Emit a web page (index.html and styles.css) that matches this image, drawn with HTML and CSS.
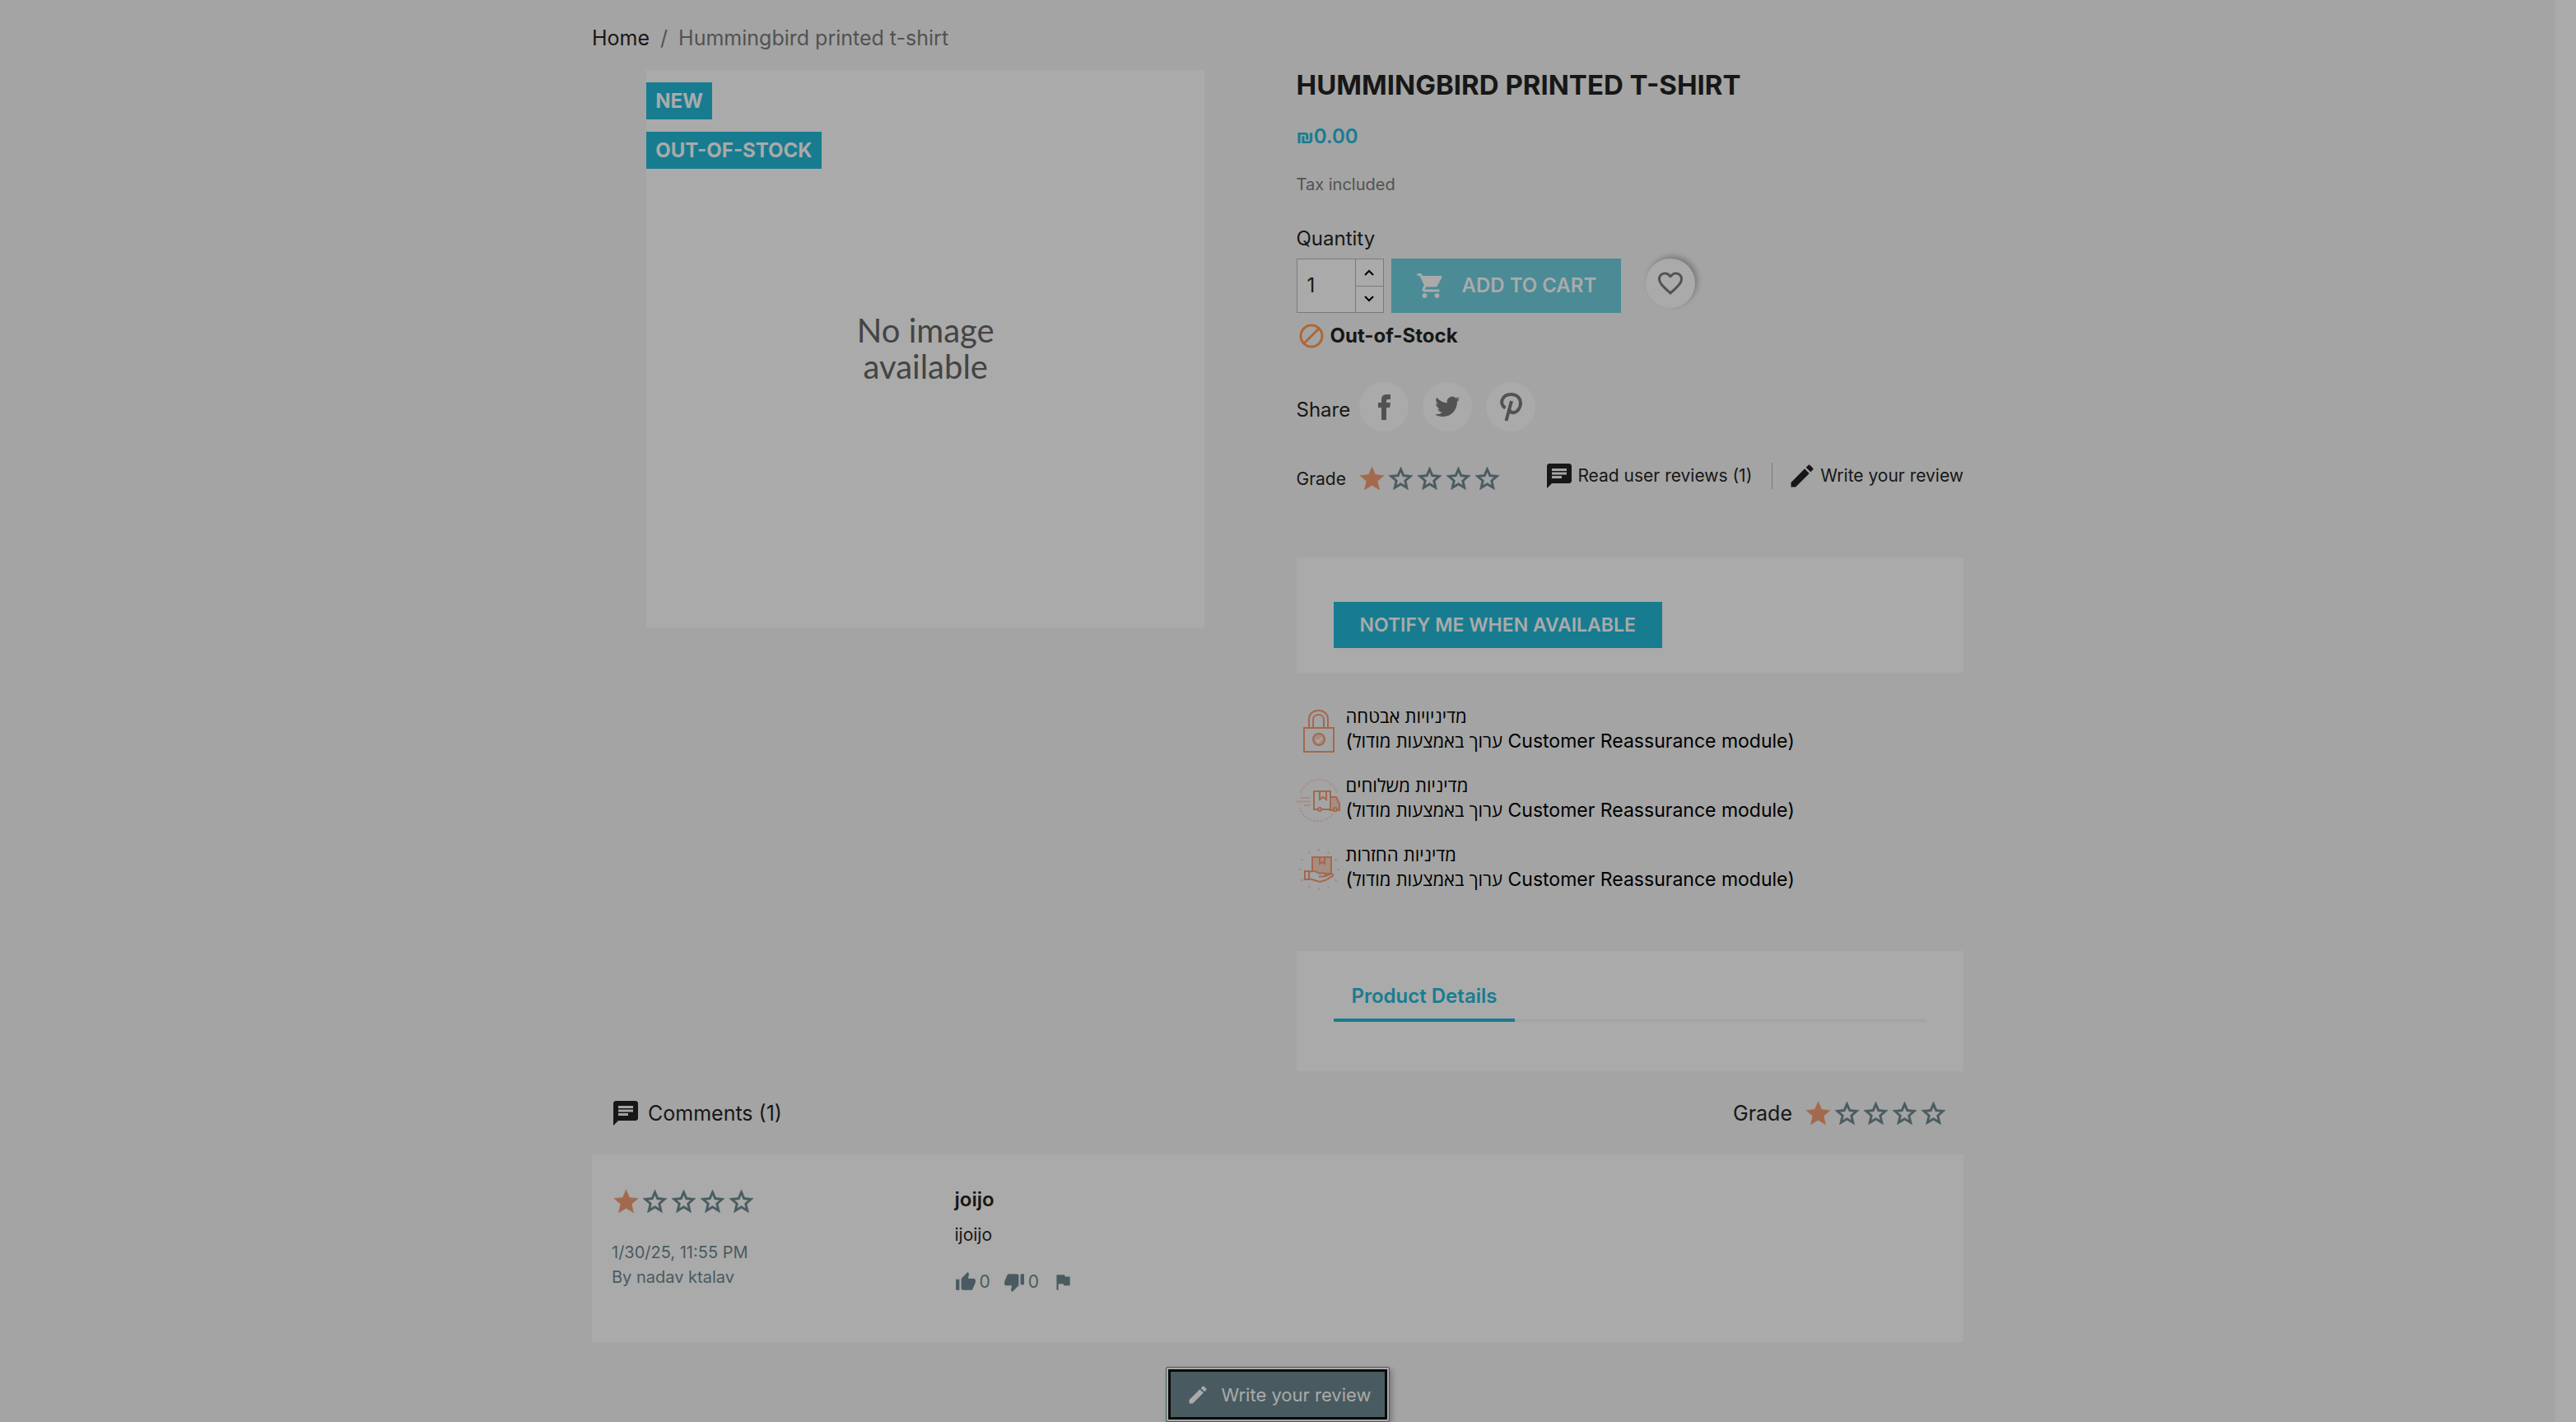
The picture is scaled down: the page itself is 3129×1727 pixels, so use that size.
FILE: index.html
```html
<!DOCTYPE html>
<html lang="en">
<head>
<meta charset="utf-8">
<title>Hummingbird printed t-shirt</title>
<link rel="stylesheet" href="styles.css">
</head>
<body>
<svg class="sprite" aria-hidden="true">
  <symbol id="star" viewBox="0 0 24 24"><path d="M12 17.27L18.18 21l-1.64-7.03L22 9.24l-7.19-.61L12 2 9.19 8.63 2 9.24l5.46 4.73L5.82 21z"/></symbol>
  <symbol id="star-empty" viewBox="0 0 24 24"><path d="M22 9.24l-7.19-.62L12 2 9.19 8.63 2 9.24l5.46 4.73L5.82 21 12 17.27 18.18 21l-1.63-7.03L22 9.24zM12 15.4l-3.76 2.27 1-4.28-3.32-2.88 4.38-.38L12 6.1l1.71 4.04 4.38.38-3.32 2.88 1 4.28L12 15.4z"/></symbol>
  <symbol id="chat" viewBox="0 0 24 24"><path d="M20 2H4c-1.1 0-1.99.9-1.99 2L2 22l4-4h14c1.1 0 2-.9 2-2V4c0-1.1-.9-2-2-2zM6 9h12v2H6V9zm8 5H6v-2h8v2zm4-6H6V6h12v2z"/></symbol>
  <symbol id="pencil" viewBox="0 0 24 24"><path d="M3 17.25V21h3.75L17.81 9.94l-3.75-3.75L3 17.25zM20.71 7.04c.39-.39.39-1.02 0-1.41l-2.34-2.34c-.39-.39-1.02-.39-1.41 0l-1.83 1.83 3.75 3.75 1.83-1.83z"/></symbol>
  <symbol id="cart" viewBox="0 0 24 24"><path d="M7 18c-1.1 0-1.99.9-1.99 2S5.9 22 7 22s2-.9 2-2-.9-2-2-2zM1 2v2h2l3.6 7.59-1.35 2.45c-.16.28-.25.61-.25.96 0 1.1.9 2 2 2h12v-2H7.42c-.14 0-.25-.11-.25-.25l.03-.12.9-1.63h7.45c.75 0 1.41-.41 1.75-1.03l3.58-6.49c.08-.14.12-.31.12-.48 0-.55-.45-1-1-1H5.21l-.94-2H1zm16 16c-1.1 0-1.99.9-1.99 2s.89 2 1.99 2 2-.9 2-2-.9-2-2-2z"/></symbol>
  <symbol id="heart" viewBox="0 0 24 24"><path d="M16.5 3c-1.74 0-3.41.81-4.5 2.09C10.91 3.81 9.24 3 7.5 3 4.42 3 2 5.42 2 8.5c0 3.78 3.4 6.86 8.55 11.54L12 21.35l1.45-1.32C18.6 15.36 22 12.28 22 8.5 22 5.42 19.58 3 16.5 3zm-4.4 15.55l-.1.1-.1-.1C7.14 14.24 4 11.39 4 8.5 4 6.5 5.5 5 7.5 5c1.54 0 3.04.99 3.57 2.36h1.87C13.46 5.99 14.96 5 16.5 5c2 0 3.5 1.5 3.5 3.5 0 2.89-3.14 5.74-7.9 10.05z"/></symbol>
  <symbol id="up" viewBox="0 0 24 24"><path d="M1 21h4V9H1v12zm22-11c0-1.1-.9-2-2-2h-6.31l.95-4.57.03-.32c0-.41-.17-.79-.44-1.06L14.17 1 7.59 7.59C7.22 7.95 7 8.45 7 9v10c0 1.1.9 2 2 2h9c.83 0 1.54-.5 1.84-1.22l3.02-7.05c.09-.23.14-.47.14-.73v-2z"/></symbol>
  <symbol id="down" viewBox="0 0 24 24"><path d="M15 3H6c-.83 0-1.54.5-1.84 1.22l-3.02 7.05c-.09.23-.14.47-.14.73v2c0 1.1.9 2 2 2h6.31l-.95 4.57-.03.32c0 .41.17.79.44 1.06L9.83 23l6.59-6.59c.36-.36.58-.86.58-1.41V5c0-1.1-.9-2-2-2zm4 0v12h4V3h-4z"/></symbol>
  <symbol id="flag" viewBox="0 0 24 24"><path d="M14.4 6L14 4H5v17h2v-7h5.6l.4 2h7V6z"/></symbol>
</svg>

<div class="page">
  <div class="container">
    <nav class="breadcrumb" aria-label="Breadcrumb">
      <a href="#">Home</a><span>/</span><span>Hummingbird printed t-shirt</span>
    </nav>

    <main>
      <div class="product">
        <section class="gallery">
          <div class="cover">
            <ul class="flags">
              <li>NEW</li>
              <li>OUT-OF-STOCK</li>
            </ul>
            <p class="no-image">No image<br>available</p>
          </div>
        </section>

        <section class="info">
          <h1>HUMMINGBIRD PRINTED T-SHIRT</h1>
          <p class="price">₪0.00</p>
          <p class="tax">Tax included</p>

          <label class="quantity-label" for="quantity">Quantity</label>
          <div class="buy">
            <div class="quantity">
              <input id="quantity" type="text" value="1">
              <div class="steps">
                <button type="button" aria-label="Increase"><svg viewBox="0 0 12 12"><path d="M1 9l5-5 5 5"/></svg></button>
                <button type="button" aria-label="Decrease"><svg viewBox="0 0 12 12"><path d="M1 3l5 5 5-5"/></svg></button>
              </div>
            </div>
            <button class="add" type="button"><svg class="icon"><use href="#cart"/></svg>ADD TO CART</button>
            <button class="wish" type="button" aria-label="Add to wishlist"><svg class="icon"><use href="#heart"/></svg></button>
          </div>
          <p class="stock"><svg viewBox="0 0 30 30"><circle cx="15" cy="15" r="13"/><path d="M6 24L24 6"/></svg>Out-of-Stock</p>

          <div class="share">
            <span>Share</span>
            <a href="#" aria-label="Share on Facebook"><svg viewBox="0 0 60 60"><path d="M27 46V31h-4v-6h4v-3c0-5 2-7 7-7h4v6h-3c-2 0-2 1-2 2v2h5l-1 6h-4v15z"/></svg></a>
            <a href="#" aria-label="Tweet"><svg viewBox="0 0 60 60"><path d="M45 20.5c-1.1.5-2.3.8-3.5 1 1.3-.8 2.2-2 2.7-3.4-1.2.7-2.5 1.2-3.9 1.5a6.2 6.2 0 0 0-10.5 5.6c-5.1-.3-9.7-2.7-12.7-6.5a6.2 6.2 0 0 0 1.9 8.2c-1 0-2-.3-2.8-.8 0 3 2.1 5.6 4.900 6.200-.9.2-1.800.3-2.800.1.8 2.500 3.100 4.200 5.800 4.300A12.400 12.400 0 0 1 15 39.200c2.700 1.800 6 2.800 9.500 2.800 11.400 0 17.800-9.600 17.400-18.300 1.200-.9 2.300-1.900 3.100-3.200z"/></svg></a>
            <a href="#" aria-label="Pin it"><svg viewBox="0 0 60 60"><path class="line" d="M23.5 31.5C15 26 20 15 30.5 15c8 0 13 6 11 14-2 7-9 11-13 5.5M31 23l-6.500 24"/></svg></a>
          </div>

          <div class="review-bar">
            <div class="grade">Grade
              <span class="stars"><svg class="on"><use href="#star"/></svg><svg><use href="#star-empty"/></svg><svg><use href="#star-empty"/></svg><svg><use href="#star-empty"/></svg><svg><use href="#star-empty"/></svg></span>
            </div>
            <div class="review-links">
              <a href="#comments"><svg class="icon"><use href="#chat"/></svg>Read user reviews (1)</a>
              <a href="#write"><svg class="icon"><use href="#pencil"/></svg>Write your review</a>
            </div>
          </div>

          <div class="card notify"><button type="button">NOTIFY ME WHEN AVAILABLE</button></div>

          <ul class="reassurance">
            <li>
              <svg viewBox="0 0 54 54"><path d="M15 22V13c0-15 23-15 23 0v9M20 22v-9c0-8 13-8 13 0v9"/><path d="M9 23h36v29H9z" class="bold"/><circle cx="27" cy="37" r="7" class="tint bold"/><path d="M24 37l2 3 5-5" class="pale"/></svg>
              <p><span lang="he">מדיניויות אבטחה</span><br>(<span lang="he">ערוך באמצעות מודול</span> Customer Reassurance module)</p>
            </li>
            <li>
              <svg viewBox="0 0 54 54"><path class="faint" stroke-dasharray="2 2" d="M5 18a23 23 0 0 1 44 0M4 36a23 23 0 0 0 44 0"/><path class="faint" d="M5 24h12M0 28.500h17M9 33h8"/><path class="tint" d="M41 23h7l4 8v8h-11z"/><path class="bold" d="M21 16h20v22H21zM28 17v9l4-3 4 3v-9"/><circle cx="28" cy="38" r="2" class="bold fill"/><circle cx="47" cy="38" r="2" class="bold fill"/></svg>
              <p><span lang="he">מדיניות משלוחים</span><br>(<span lang="he">ערוך באמצעות מודול</span> Customer Reassurance module)</p>
            </li>
            <li>
              <svg viewBox="0 0 54 54"><path class="faint" d="M27 2v3M27 49v3M2 27h3M49 27h3M15 5l1 3M39 5l-1 3M5 14l3 2M49 14l-3 2M5 41l3-2M49 41l-3-2M15 50l1-3M39 50l-1-3"/><path class="tint" d="M19 12h23v20H19z"/><path d="M28 12v8l3-2 3 2v-8"/><path class="fill" d="M15 30c6-2 9-1 12 1.500h6c2 0 2 4 0 4h-6 7l7-3c3-1 4 2 2 3l-8 4.500-7 2-13-4zM10 29h5v10h-5z"/></svg>
              <p><span lang="he">מדיניות החזרות</span><br>(<span lang="he">ערוך באמצעות מודול</span> Customer Reassurance module)</p>
            </li>
          </ul>

          <div class="card details">
            <div class="tabs"><a href="#details">Product Details</a></div>
          </div>
        </section>
      </div>

      <section id="comments">
        <header class="comments-head">
          <h2><svg class="icon"><use href="#chat"/></svg>Comments (1)</h2>
          <div class="grade">Grade
            <span class="stars"><svg class="on"><use href="#star"/></svg><svg><use href="#star-empty"/></svg><svg><use href="#star-empty"/></svg><svg><use href="#star-empty"/></svg><svg><use href="#star-empty"/></svg></span>
          </div>
        </header>
        <article class="card comment">
          <div class="meta">
            <span class="stars"><svg class="on"><use href="#star"/></svg><svg><use href="#star-empty"/></svg><svg><use href="#star-empty"/></svg><svg><use href="#star-empty"/></svg><svg><use href="#star-empty"/></svg></span>
            <p>1/30/25, 11:55 PM<br>By nadav ktalav</p>
          </div>
          <div class="body">
            <h3>joijo</h3>
            <p>ijoijo</p>
            <div class="votes">
              <button type="button" aria-label="Useful"><svg><use href="#up"/></svg>0</button>
              <button type="button" aria-label="Not useful"><svg><use href="#down"/></svg>0</button>
              <button type="button" aria-label="Report"><svg><use href="#flag"/></svg></button>
            </div>
          </div>
        </article>
        <button class="write" id="write" type="button"><svg><use href="#pencil"/></svg>Write your review</button>
      </section>
    </main>
  </div>
</div>
<div class="gutter"></div>
</body>
</html>
```
FILE: styles.css
```css
:root {
  --page: #a4a4a4;
  --surface: #aaaaaa;
  --primary: #187c90;
  --ink: #171717;
  --muted: #525252;
  --slate: #495b60;
  --orange: #a3694c;
}

* { box-sizing: border-box; }

body, h1, h2, h3, p, ul { margin: 0; padding: 0; }
ul { list-style: none; }
a { color: inherit; text-decoration: none; }
button, input { font: inherit; color: inherit; border: 0; padding: 0; background: none; }
svg { display: block; flex: none; fill: currentColor; }

body {
  display: flex;
  min-height: 100vh;
  background: var(--page);
  color: var(--ink);
  font: 24px/30px Inter, "Open Sans", "Noto Sans", sans-serif;
}

.sprite { position: absolute; width: 0; height: 0; }
.page { flex: 1; min-width: 0; }
.gutter { width: 25px; background: var(--surface); }
.container { max-width: 1666px; margin: 0 auto; padding-top: 28px; }
.icon { width: 36px; height: 36px; }
.card { background: var(--surface); }

.breadcrumb {
  display: flex;
  gap: 13px;
  margin-bottom: 21px;
  font-size: 25px;
  line-height: 36px;
  color: var(--muted);
}
.breadcrumb a { color: var(--ink); }

.product { display: grid; grid-template-columns: 1fr 1fr; gap: 45px; }

.cover {
  display: flex;
  flex-direction: column;
  max-width: 678px;
  aspect-ratio: 1;
  margin: 0 auto;
  padding-top: 15px;
  background: var(--surface);
}
.flags { display: flex; flex-direction: column; align-items: flex-start; gap: 15px; }
.flags li {
  padding: 0 11px;
  line-height: 45px;
  font-weight: 700;
  color: var(--surface);
  background: var(--primary);
}
.no-image {
  margin-top: 174px;
  font: 40px/44px Lato, "Open Sans", sans-serif;
  text-align: center;
  color: #444;
}

h1 { font-size: 33px; line-height: 36px; font-weight: 700; }
.price { margin-top: 30px; font-weight: 600; color: var(--primary); }
.tax { margin-top: 28px; font-size: 20px; color: var(--muted); }
.quantity-label { display: block; margin: 36px 0 9px; }

.buy { display: flex; align-items: flex-start; }
.quantity {
  display: flex;
  width: 106px;
  height: 66px;
  margin-right: 9px;
  border: 1px solid #7b7b7b;
  background: var(--surface);
}
.quantity input { flex: 1; min-width: 0; padding-left: 12px; }
.steps { display: flex; flex-direction: column; width: 34px; border-left: 1px solid #7b7b7b; color: #000; }
.steps button { flex: 1; display: flex; align-items: center; justify-content: center; }
.steps button + button { border-top: 1px solid #7b7b7b; }
.steps svg { width: 12px; height: 12px; fill: none; stroke: currentColor; stroke-width: 2; }
.add {
  display: flex;
  align-items: center;
  gap: 20px;
  height: 66px;
  margin-right: 30px;
  padding: 0 30px;
  font-weight: 600;
  color: var(--surface);
  background: #4a8b96;
}
.wish {
  display: flex;
  align-items: center;
  justify-content: center;
  width: 60px;
  height: 60px;
  border-radius: 50%;
  color: var(--muted);
  background: var(--surface);
  box-shadow: 3px -3px 6px rgba(0, 0, 0, 0.25);
}
.stock { display: flex; gap: 8px; margin: 13px 0 0 3px; font-weight: 700; }
.stock svg { width: 30px; height: 30px; fill: none; stroke: #ae6836; stroke-width: 3; }

.share { display: flex; align-items: center; gap: 17px; margin-top: 41px; }
.share span { padding-top: 8px; margin-right: -6px; }
.share a { border-radius: 50%; color: var(--muted); background: var(--surface); }
.share svg { width: 60px; height: 60px; }
.share .line { fill: none; stroke: currentColor; stroke-width: 4; }

.grade { display: flex; align-items: center; gap: 14px; }
.stars { display: flex; color: var(--slate); }
.stars svg { width: 35px; height: 35px; stroke: currentColor; stroke-width: 0.4px; }
.stars .on { color: var(--orange); }

.review-bar { display: flex; justify-content: space-between; align-items: flex-start; margin-top: 38px; font-size: 21px; }
.review-bar .grade { padding-top: 2px; }
.review-links { display: flex; }
.review-links a { display: flex; align-items: center; gap: 4px; height: 32px; }
.review-links a + a { margin-left: 24px; padding-left: 18px; border-left: 1px solid #7b7b7b; }

.notify { margin-top: 78px; padding: 54px 45px 30px; }
.notify button {
  display: block;
  height: 56px;
  padding: 0 32px;
  font-size: 23px;
  font-weight: 600;
  color: var(--surface);
  background: var(--primary);
}

.reassurance { display: flex; flex-direction: column; gap: 24px; margin-top: 38px; color: #000; font-size: 23px; }
.reassurance li { display: flex; gap: 6px; }
.reassurance [lang="he"] { font-size: 22px; }
.reassurance svg { width: 54px; height: 54px; margin-top: 6px; fill: none; stroke: var(--orange); stroke-width: 2; }
.reassurance .bold { stroke-width: 2; }
.reassurance .tint { fill: #a58d83; }
.reassurance .fill { fill: var(--page); }
.reassurance .faint { stroke: #a58d83; }
.reassurance .pale { stroke: #aaa; }

.details { margin-top: 72px; padding: 36px 45px 60px; }
.tabs { display: flex; box-shadow: inset 0 -3px 0 #a3a3a3; }
.tabs a {
  padding: 0 22px 8px;
  line-height: 38px;
  font-weight: 600;
  color: var(--primary);
  border-bottom: 4px solid var(--primary);
}

.comments-head { display: flex; justify-content: space-between; align-items: center; padding: 33px 19px 32px 23px; font-size: 25px; }
.comments-head h2 { display: flex; align-items: center; gap: 9px; font-size: 25px; font-weight: 400; line-height: 36px; }
.comment { display: grid; grid-template-columns: 1fr 3fr; padding: 40px 0 58px; font-size: 21px; }
.meta, .body { padding: 0 24px; }
.meta { font-size: 20px; color: var(--slate); }
.meta p { margin-top: 29px; }
.body h3 { font-size: 24px; font-weight: 600; }
.body p { margin-top: 13px; }
.votes { display: flex; gap: 16px; margin-top: 27px; color: var(--slate); }
.votes button { display: flex; align-items: center; gap: 4px; height: 30px; }
.votes svg { width: 26px; height: 26px; }

.write {
  display: flex;
  align-items: center;
  gap: 15px;
  height: 67px;
  margin: 30px auto 0;
  padding: 0 22px 0 24px;
  border: 1px solid var(--slate);
  outline: 3px solid #0a0a0a;
  outline-offset: -6px;
  border-radius: 2px;
  color: var(--surface);
  background: var(--slate);
  box-shadow: inset 0 0 0 3px var(--surface), 3px 3px 6px rgba(0, 0, 0, 0.25);
  font-size: 22px;
}
.write svg { width: 28px; height: 28px; }
```
